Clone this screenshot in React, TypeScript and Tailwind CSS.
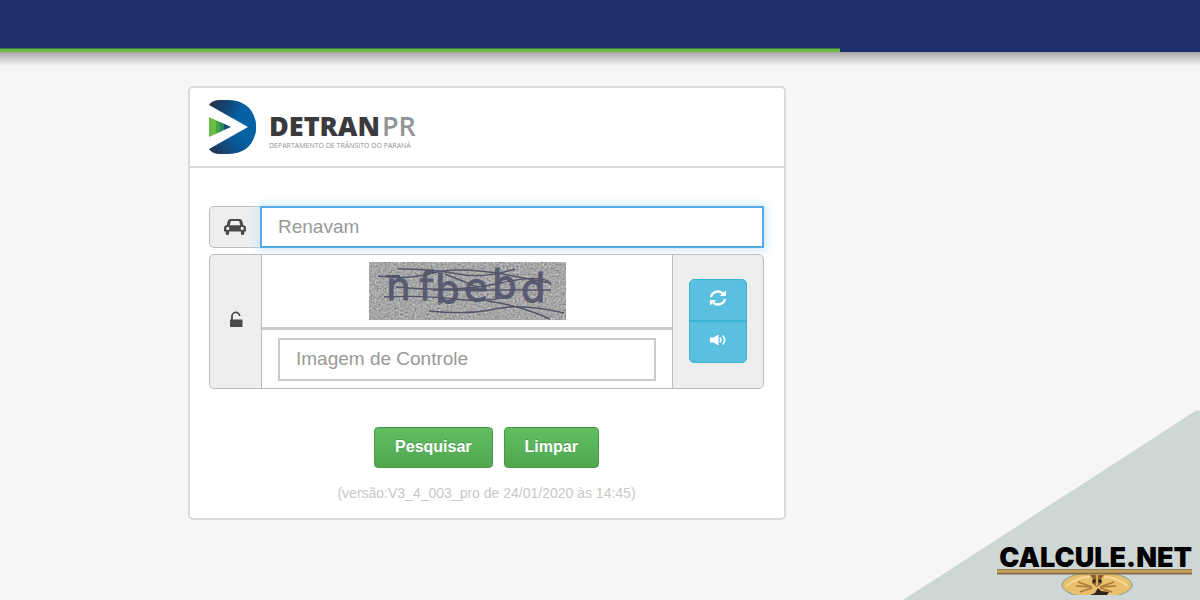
import type { ReactNode } from "react";

const CarIcon = () => (
  <svg width="22" height="18" viewBox="0 0 22 18" fill="#4a4a4d" aria-hidden="true">
    <path
      fillRule="evenodd"
      d="M6.500 1h9a3 3 0 0 1 2.800 2.200L19.300 7.200A2.800 2.800 0 0 1 22 10V13a.6.6 0 0 1-.6.6H20.300v1.800a1.700 1.700 0 0 1-3.400 0v-1.800H5.100v1.800a1.700 1.700 0 0 1-3.400 0v-1.800H.6A.6.6 0 0 1 0 13V10a2.800 2.800 0 0 1 2.700-2.800l1-4A3 3 0 0 1 6.500 1Zm.3 2.200L5.700 7.200h10.600l-1.100-4a.5.5 0 0 0-.4-.3H7.200a.5.5 0 0 0-.4.3ZM3.800 8.800a1.600 1.600 0 1 0 0 3.200 1.600 1.600 0 0 0 0-3.200Zm14.400 0a1.600 1.600 0 1 0 0 3.200 1.600 1.600 0 0 0 0-3.200Z"
    />
  </svg>
);

const UnlockIcon = () => (
  <svg width="14" height="17" viewBox="0 0 14 17" fill="none" aria-hidden="true">
    <path d="M3 9V5.500a3.800 3.800 0 0 1 7.600-.5" stroke="#4a4a4d" strokeWidth="1.800" />
    <rect x="1" y="8.500" width="12.500" height="7.500" rx="0.600" fill="#4a4a4d" />
  </svg>
);

const RefreshIcon = () => (
  <svg width="18" height="18" viewBox="0 0 18 18" fill="none" aria-hidden="true">
    <path d="M2 8a7 6.500 0 0 1 11.800-3.600M16 10A7 6.500 0 0 1 4.200 13.600" stroke="white" strokeWidth="2.300" />
    <path d="M17 1.500v5.500h-6.400ZM1 16.500V11h6.400Z" fill="white" />
  </svg>
);

const VolumeIcon = () => (
  <svg width="18" height="14" viewBox="0 0 18 14" fill="none" aria-hidden="true">
    <path d="M1 4.500h3.500L9.500 1.500v11L4.500 9.500H1Z" fill="white" />
    <path
      d="M11 4.500q1.800 2.500 0 5M13.800 2.500q3.600 4.500 0 9"
      stroke="white"
      strokeWidth="1.600"
    />
  </svg>
);

const DetranMark = () => (
  <svg width="50" height="56" viewBox="0 0 50 56" aria-hidden="true">
    <defs>
      <linearGradient id="mark" x1="0" y1="0" x2="1" y2="0.300">
        <stop offset="0.100" stopColor="#26344f" />
        <stop offset="0.450" stopColor="#0f4a7d" />
        <stop offset="0.700" stopColor="#0661a4" />
      </linearGradient>
      <linearGradient id="markLow" x1="0" y1="1" x2="1" y2="0.400">
        <stop offset="0.050" stopColor="#26344f" />
        <stop offset="0.500" stopColor="#0b5490" />
        <stop offset="0.800" stopColor="#0661a4" />
      </linearGradient>
    </defs>
    <path d="M1 6Q4 1 12 1h9q21 1 26 19 2 8 0 16L40 28Z" fill="url(#mark)" />
    <path d="M1 50Q4 55 12 55h9q21-1 26-19 2-8 0-16L40 28Z" fill="url(#markLow)" />
    <path d="M1 18v20l7-3.200V21.200Z" fill="#6abd45" />
    <path d="M8 21.200v13.600l4-1.800V23Z" fill="#43a648" />
    <path d="M12 23v10l4-2v-6.200Z" fill="#27865b" />
    <path d="M16 24.800V31l7-3Z" fill="#174c70" />
  </svg>
);

const Captcha = () => (
  <svg
    width="197"
    height="58"
    viewBox="0 0 197 58"
    role="img"
    aria-label="Imagem de Controle"
  >
    <defs>
      <filter id="grain" x="0" y="0" width="100%" height="100%" colorInterpolationFilters="sRGB">
        <feTurbulence type="fractalNoise" baseFrequency="0.500" numOctaves="2" seed="4" />
        <feColorMatrix values="0.350 0.200 0.150 0 0.300 0.180 0.370 0.150 0 0.300 0.180 0.200 0.320 0 0.300 0 0 0 0 1" />
      </filter>
    </defs>
    <rect width="197" height="58" filter="url(#grain)" />
    <g
      fill="#5a5a72"
      stroke="#5a5a72"
      strokeWidth="1"
      fontFamily="'DejaVu Sans', sans-serif"
      fontSize="39"
    >
      <text x="17" y="38">n</text>
      <text x="50" y="38">f</text>
      <text x="66" y="41">b</text>
      <text x="95" y="39">e</text>
      <text x="123" y="36">b</text>
      <text x="152" y="40">d</text>
    </g>
    <g fill="none" stroke="#54546a" strokeWidth="1.400">
      <path d="M9 14q30 4 55-3t75 2l43 8" />
      <path d="M29 7q35 0 60 5t57-5" />
      <path d="M15 35q40-2 70 2t57-3" />
      <path d="M27 25q60 6 105-4t50 2" />
      <path d="M64 28h118" />
      <path d="M76 12q20 8 32 13" />
      <path d="M60 49q40 4 66-2t69 4" />
      <path d="M118 39q32 4 63 18" />
      <path d="M17 14h14" strokeWidth="2" />
    </g>
  </svg>
);

const WatermarkArt = () => (
  <svg width="196" height="28" viewBox="0 0 196 28" aria-hidden="true">
    <defs>
      <linearGradient id="beam" x1="0" y1="0" x2="0" y2="1">
        <stop offset="0" stopColor="#8a7040" />
        <stop offset="0.400" stopColor="#cfaa62" />
        <stop offset="1" stopColor="#91704a" />
      </linearGradient>
      <clipPath id="dish">
        <path d="M62 0h80v27H62Z" />
      </clipPath>
    </defs>
    <g clipPath="url(#dish)">
      <ellipse cx="101" cy="17" rx="35" ry="13" fill="#e8bf6c" stroke="#839c98" />
      <path d="M70 18q14-10 24-9M132 18q-14-10-24-9" fill="none" stroke="#f4d895" strokeWidth="2" />
      <path
        d="m82 14 14 5-16-1m4 6 12-4m22-6-14 5 16-1m-4 6-12-4"
        fill="none"
        stroke="#ab7b3c"
        strokeWidth="1.400"
      />
      <path d="M94 7h14l-3 4 1 4-5 4-5-4 1-4Z" fill="#89602f" />
      <circle cx="98" cy="13" r="1.800" fill="#30251e" />
      <circle cx="104" cy="13" r="1.800" fill="#30251e" />
      <path d="m101 7v11" stroke="#e8bf6c" strokeWidth="1.600" />
      <path d="M94 27h17l2-3-8-1-3-3-3 5Z" fill="#30251e" />
    </g>
    <rect x="1" y="1" width="195" height="5" fill="url(#beam)" />
    <path d="M1 6h195" stroke="#75683f" />
  </svg>
);

type SubmitProps = {
  type: "submit" | "reset";
  children: ReactNode;
};

const GreenButton = ({ type, children }: SubmitProps) => (
  <button
    type={type}
    className="h-[41px] px-5 pb-[2px] rounded-[4px] border border-[#459b48] bg-linear-to-b from-[#62bd62] via-[#59b35a] to-[#50a64f] text-white text-[16px] leading-[20px] font-bold [text-shadow:0_-1px_0_rgba(0,0,0,0.2)]"
  >
    {children}
  </button>
);

const App = () => {
  return (
    <div className="relative min-h-screen overflow-hidden bg-[#f6f6f6] font-['Liberation_Sans',Arial,sans-serif]">
      <header className="flex h-[52px] items-end bg-[#20306f]">
        <div className="h-1 w-[70%] border-t border-[#3b7a52] bg-[#6fbd3e]" />
      </header>
      <div className="h-[14px] bg-linear-to-b from-[#a9a9a9] to-[#f6f6f6]" />

      <main className="px-4 pt-5 pb-20 md:pl-[188px]">
        <form className="w-full max-w-[598px] rounded-[5px] border-2 border-[#dadada] bg-white">
          <div className="flex h-[80px] items-center gap-[11px] border-b-2 border-[#dadada] px-[18px]">
            <DetranMark />
            <div className="pt-2 font-['Open_Sans',sans-serif] whitespace-nowrap">
              <h1 className="flex gap-[2px] text-[27px] leading-[30px] font-extrabold text-[#3a3a3c]">
                DETRAN<span className="font-semibold text-[#929497]">PR</span>
              </h1>
              <p className="text-[7px] leading-[10px] text-[#8f8f91]">
                DEPARTAMENTO DE TRÂNSITO DO PARANÁ
              </p>
            </div>
          </div>

          <div className="pt-[38px] pr-5 pb-4 pl-[19px]">
            <div className="flex h-[42px]">
              <label
                htmlFor="renavam"
                className="flex w-[51px] shrink-0 items-center justify-center rounded-l-[5px] border border-r-0 border-[#bdbdbd] bg-[#eee]"
              >
                <CarIcon />
              </label>
              <input
                id="renavam"
                type="text"
                aria-label="Renavam"
                placeholder="Renavam"
                className="min-w-0 flex-1 border-2 border-[#55a9e6] bg-white px-4 text-[19px] text-[#555] shadow-[0_0_8px_2px_#cbe6f9] outline-none placeholder:text-[#999]"
              />
            </div>

            <div className="mt-[6px] flex h-[135px] overflow-hidden rounded-[5px] border border-[#bdbdbd] bg-[#eee]">
              <div className="flex w-[51px] shrink-0 items-center justify-center pb-1">
                <UnlockIcon />
              </div>
              <div className="flex min-w-0 flex-1 flex-col border-x border-[#bdbdbd] bg-white">
                <div className="flex h-[75px] items-center justify-center border-b-3 border-[#cbcbcb]">
                  <Captcha />
                </div>
                <div className="flex flex-1 items-center px-4">
                  <input
                    id="controle"
                    type="text"
                    aria-label="Imagem de Controle"
                    placeholder="Imagem de Controle"
                    className="h-[43px] w-full border-2 border-[#cbcbcb] bg-white px-4 text-[19px] text-[#555] outline-none placeholder:text-[#999]"
                  />
                </div>
              </div>
              <div className="flex w-[90px] shrink-0 items-center justify-center pb-[2px]">
                <div className="w-[58px] divide-y-2 divide-[#39b3d7] overflow-hidden rounded-[5px] border border-[#39b3d7] bg-[#5bbfdf]">
                  <button
                    type="button"
                    aria-label="Atualizar imagem"
                    className="flex h-[42px] w-full items-center justify-center pb-1"
                  >
                    <RefreshIcon />
                  </button>
                  <button
                    type="button"
                    aria-label="Ouvir imagem"
                    className="flex h-[40px] w-full items-center justify-center pb-1"
                  >
                    <VolumeIcon />
                  </button>
                </div>
              </div>
            </div>

            <div className="mt-[38px] flex justify-center gap-[11px]">
              <GreenButton type="submit">Pesquisar</GreenButton>
              <GreenButton type="reset">Limpar</GreenButton>
            </div>
            <p className="mt-4 text-center text-[14px] leading-[18px] text-[#c8c8c8]">
              (versão:V3_4_003_pro de 24/01/2020 às 14:45)
            </p>
          </div>
        </form>
      </main>

      <div className="absolute right-0 bottom-0 h-[190px] w-[297px]">
        <svg className="absolute inset-0" width="297" height="190" viewBox="0 0 297 190" aria-hidden="true">
          <path d="M0 190 294 0l3 1v189Z" fill="#ced7d5" />
        </svg>
        <div className="absolute right-[8px] bottom-1 flex flex-col items-end">
          <span className="font-[Inter,sans-serif] text-[27px] leading-[20px] font-black text-black">
            CALCULE.NET
          </span>
          <WatermarkArt />
        </div>
      </div>
    </div>
  );
};

export default App;
